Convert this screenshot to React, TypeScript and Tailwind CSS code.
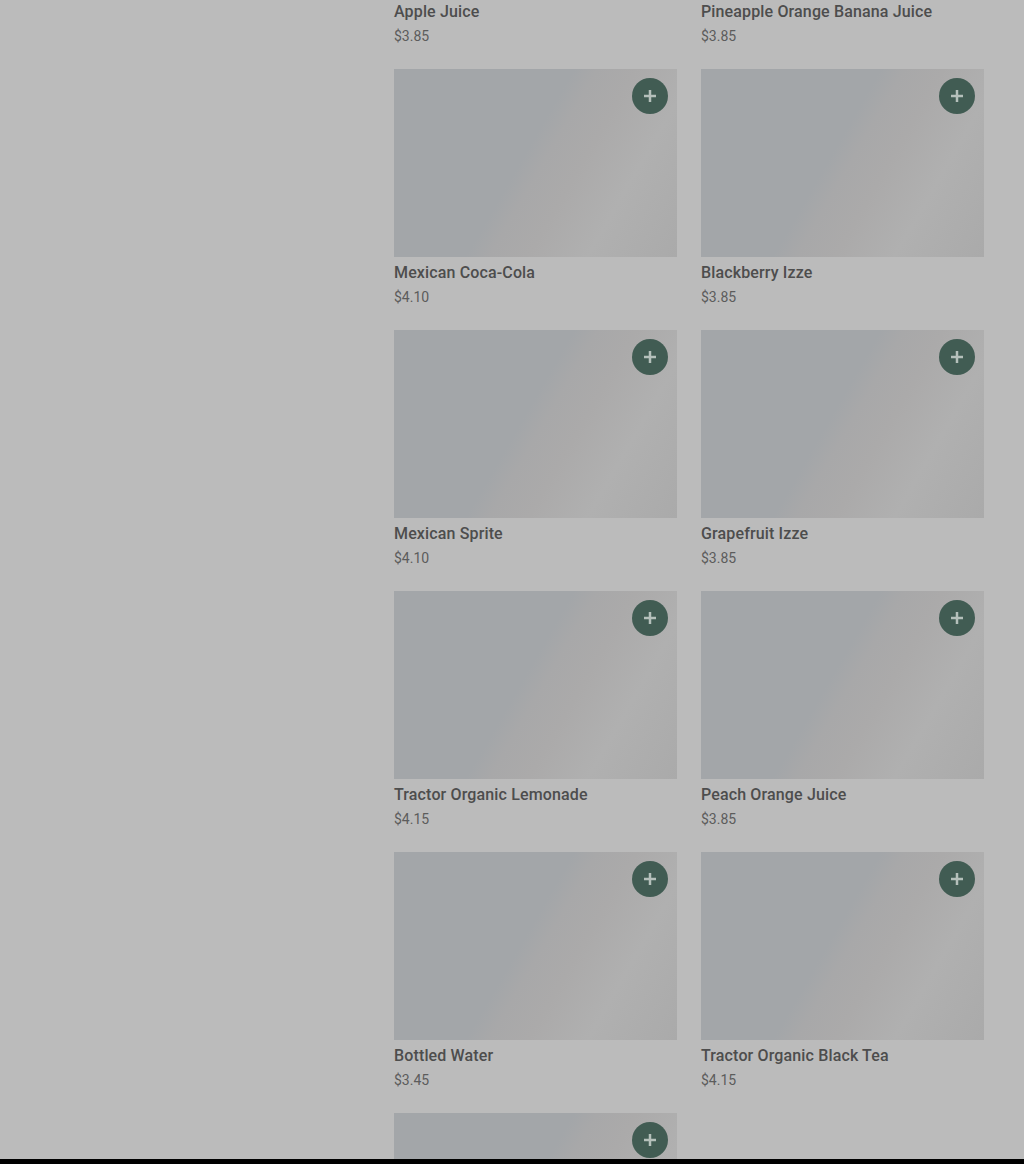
const drinks = [
  { name: 'Apple Juice', price: '$3.85' },
  { name: 'Pineapple Orange Banana Juice', price: '$3.85' },
  { name: 'Mexican Coca-Cola', price: '$4.10' },
  { name: 'Blackberry Izze', price: '$3.85' },
  { name: 'Mexican Sprite', price: '$4.10' },
  { name: 'Grapefruit Izze', price: '$3.85' },
  { name: 'Tractor Organic Lemonade', price: '$4.15' },
  { name: 'Peach Orange Juice', price: '$3.85' },
  { name: 'Bottled Water', price: '$3.45' },
  { name: 'Tractor Organic Black Tea', price: '$4.15' },
  { name: '', price: '' },
]

function DrinkCard({ name, price }: { name: string; price: string }) {
  return (
    <div className="h-[261px]">
      <div className="relative h-[188px] bg-[linear-gradient(120deg,#a3a6a9_0%,#a3a6a9_46%,#a8a8a9_52%,#abaaaa_62%,#b0b0b0_77%,#aaaaaa_100%)]">
        <button className="absolute right-[9px] top-[9px] flex h-9 w-9 items-center justify-center rounded-full bg-[#415c53]" aria-label={`Add ${name}`}>
          <svg width="14" height="14" viewBox="0 0 14 14" fill="none" stroke="#b5c0bb" strokeWidth="2.5">
            <path d="M7 1v12M1 7h12" />
          </svg>
        </button>
      </div>
      <div className="mt-[5px] text-[16px] leading-[22px] font-medium tracking-[0.14px] text-[#4d4d4d]">{name}</div>
      <div className="mt-[2px] text-[14px] leading-[22px] text-[#5c5c5c]">{price}</div>
    </div>
  )
}

export default function App() {
  return (
    <div className="h-[1164px] overflow-hidden bg-black font-['Roboto',sans-serif]">
      <div className="h-[1159px] overflow-hidden bg-[#bbbbbb]">
        <div className="ml-[394px] -mt-[192px] grid w-[590px] grid-cols-2 gap-x-[24px]">
          {drinks.map((d, i) => (
            <DrinkCard key={i} name={d.name} price={d.price} />
          ))}
        </div>
      </div>
    </div>
  )
}
